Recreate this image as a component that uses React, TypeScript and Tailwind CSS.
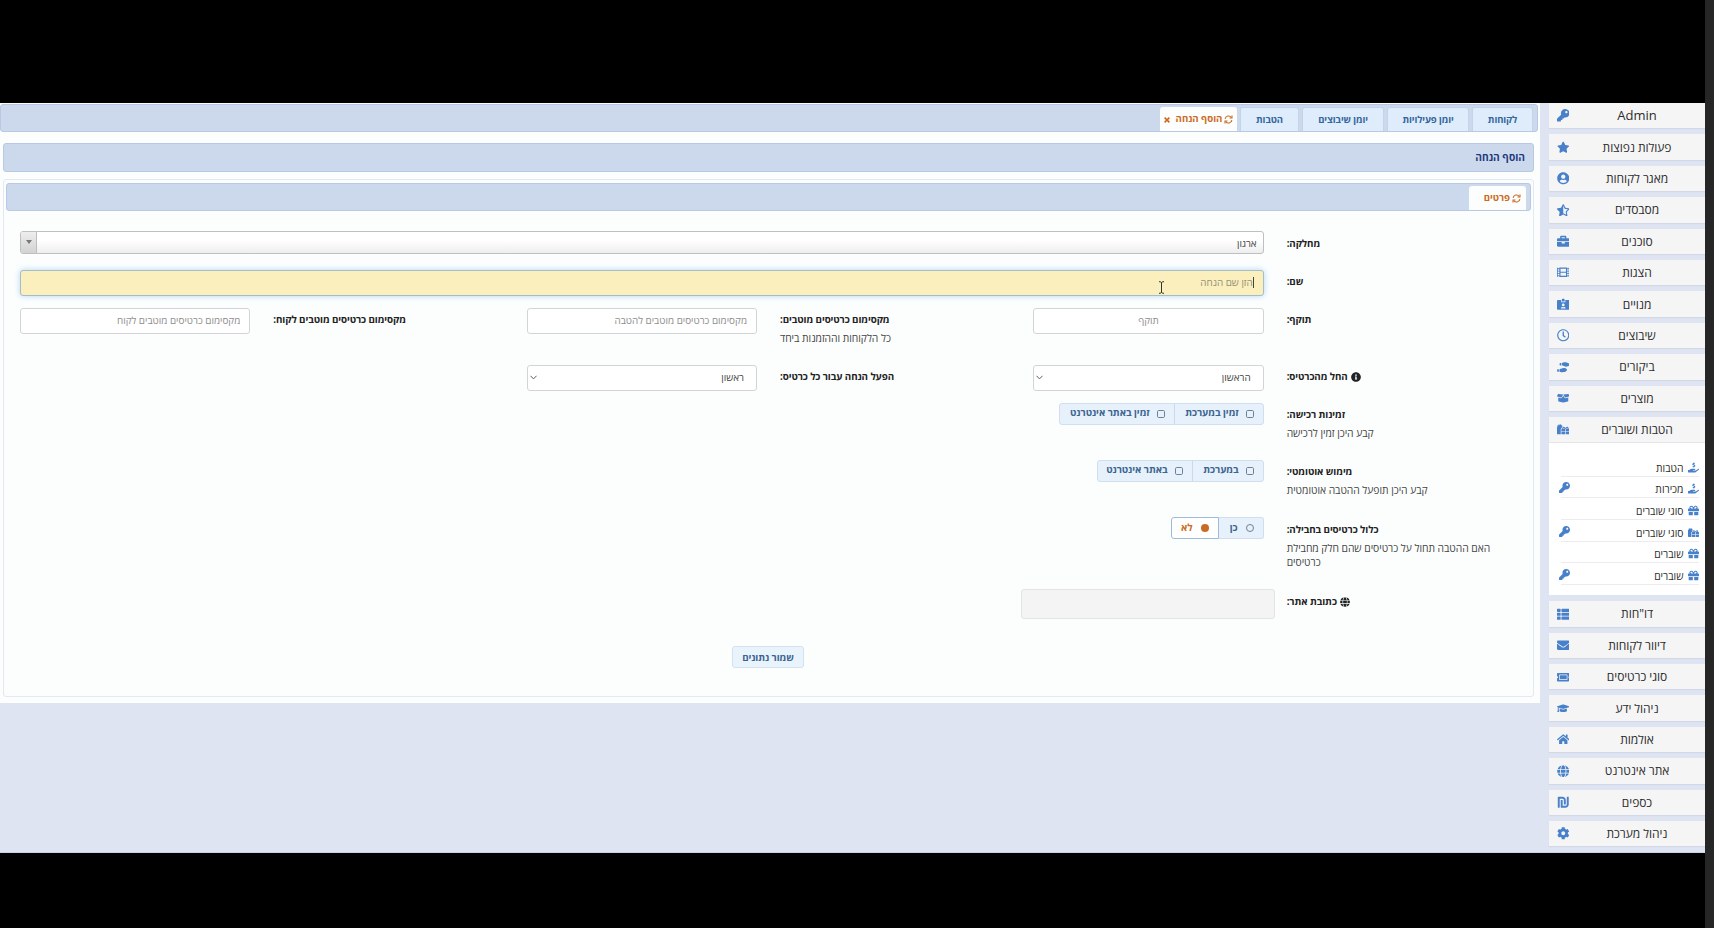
import type { ReactNode } from 'react';
import type { IconType } from 'react-icons';
import {
  FaBoxOpen,
  FaBriefcase,
  FaCog,
  FaEnvelope,
  FaFilm,
  FaGift,
  FaGifts,
  FaGlobe,
  FaGraduationCap,
  FaHandHoldingUsd,
  FaHome,
  FaIdCardAlt,
  FaInfoCircle,
  FaKey,
  FaRegClock,
  FaShekelSign,
  FaShoePrints,
  FaStar,
  FaStarHalfAlt,
  FaThList,
  FaTicketAlt,
  FaUserCircle,
} from 'react-icons/fa';

interface MenuEntry {
  label: string;
  icon: IconType;
}

interface SubEntry extends MenuEntry {
  locked?: boolean;
}

const topMenu: MenuEntry[] = [
  { label: 'Admin', icon: FaKey },
  { label: 'פעולות נפוצות', icon: FaStar },
  { label: 'מאגר לקוחות', icon: FaUserCircle },
  { label: 'מסבסדים', icon: FaStarHalfAlt },
  { label: 'סוכנים', icon: FaBriefcase },
  { label: 'הצגות', icon: FaFilm },
  { label: 'מנויים', icon: FaIdCardAlt },
  { label: 'שיבוצים', icon: FaRegClock },
  { label: 'ביקורים', icon: FaShoePrints },
  { label: 'מוצרים', icon: FaBoxOpen },
  { label: 'הטבות ושוברים', icon: FaGifts },
];

const subMenu: SubEntry[] = [
  { label: 'הטבות', icon: FaHandHoldingUsd },
  { label: 'מכירות', icon: FaHandHoldingUsd, locked: true },
  { label: 'סוגי שוברים', icon: FaGift },
  { label: 'סוגי שוברים', icon: FaGifts, locked: true },
  { label: 'שוברים', icon: FaGift },
  { label: 'שוברים', icon: FaGift, locked: true },
];

const bottomMenu: MenuEntry[] = [
  { label: 'דו"חות', icon: FaThList },
  { label: 'דיוור לקוחות', icon: FaEnvelope },
  { label: 'סוגי כרטיסים', icon: FaTicketAlt },
  { label: 'ניהול ידע', icon: FaGraduationCap },
  { label: 'אולמות', icon: FaHome },
  { label: 'אתר אינטרנט', icon: FaGlobe },
  { label: 'כספים', icon: FaShekelSign },
  { label: 'ניהול מערכת', icon: FaCog },
];

const RefreshIcon = () => (
  <svg viewBox="0 0 16 16" className="h-[9px] w-[9px] shrink-0" fill="none" stroke="currentColor" strokeWidth="2">
    <path d="M2 7a6 6 0 0 1 11-2.5M14 9a6 6 0 0 1-11 2.5" />
    <path d="M14.2 1v4.4H9.8M1.8 15v-4.4h4.4" />
  </svg>
);

const MenuItem = ({ label, icon: Icon }: MenuEntry) => (
  <div className="flex h-[25.4px] items-center bg-[#f5f5f6] pl-2 shadow-[0_1px_1px_#d3d8e6]">
    <span className="flex w-4 shrink-0">
      <Icon className="h-[12.5px] w-auto text-[#4880ca]" />
    </span>
    <span
      className={`flex-1 pr-[15px] pl-3 text-center text-[#2c2c2c] ${label === 'Admin' ? 'text-[13px]' : 'pt-px text-[12px] tracking-[-0.05px]'}`}
    >
      {label}
    </span>
  </div>
);

const Sidebar = () => (
  <aside className="flex w-[156px] shrink-0 flex-col gap-1.5">
    {topMenu.map((item) => (
      <MenuItem key={item.label} {...item} />
    ))}
    <div className="-mt-1.5 h-[153px] border-t border-[#e4e5ea] bg-white pt-3 pr-1.5 pl-3">
      {subMenu.map(({ label, icon: Icon, locked }, i) => (
        <div
          key={i}
          dir="rtl"
          className="flex h-[21.6px] items-end border-b border-[#ececf0] text-[10.3px] text-[#2c2c2c]"
        >
          <span className="mb-[3px] flex w-[15px] justify-start">
            <Icon className="h-[11px] w-auto max-w-[13px] text-[#4880ca]" />
          </span>
          <span className="leading-[15px]">{label}</span>
          {locked && <FaKey className="mr-auto mb-[4px] -ml-[2px] h-[11px] w-[11px] text-[#4880ca]" />}
        </div>
      ))}
    </div>
    {bottomMenu.map((item) => (
      <MenuItem key={item.label} {...item} />
    ))}
  </aside>
);

const Tab = ({ children, className }: { children: ReactNode; className: string }) => (
  <div
    className={`flex h-[24px] items-center justify-center rounded-t-[3px] border border-b-0 border-[#c3d3ea] bg-[#deecfb] pt-px text-[9.5px] font-bold tracking-[-0.1px] text-[#33669b] ${className}`}
  >
    {children}
  </div>
);

interface LabelProps {
  children: ReactNode;
  hint?: string;
  icon?: ReactNode;
}

const Label = ({ children, hint, icon }: LabelProps) => (
  <div className="pt-[3.5px] pr-6 pl-3 text-left">
    <div className="flex items-center justify-end gap-[3px] text-[9.8px] leading-[18px] font-bold tracking-[-0.1px] text-[#222]">
      {icon}
      <span>{children}</span>
    </div>
    {hint && <p className="mt-[2px] text-[10.3px] leading-[14.5px] tracking-[-0.03px] text-[#444]">{hint}</p>}
  </div>
);

const TextField = ({ placeholder, center }: { placeholder: string; center?: boolean }) => (
  <div className="pr-[11px] pl-3">
    <div
      className={`flex h-[26px] items-center rounded-[3px] border border-[#d2d5d8] bg-white px-[9px] text-[9.9px] text-[#8e8e8e] ${center ? 'justify-center' : ''}`}
    >
      {placeholder}
    </div>
  </div>
);

const SelectField = ({ value }: { value: string }) => (
  <div className="pr-[11px] pl-3">
    <div className="flex h-[26px] items-center justify-between rounded-[3px] border border-[#d2d5d8] bg-white pr-3 pl-[2px] text-[9.9px] text-[#444]">
      <span>{value}</span>
      <svg viewBox="0 0 8 8" className="h-[7px] w-[7px]" fill="none" stroke="#555" strokeWidth="1.1">
        <path d="M0.5 2 4 5.6 7.5 2" />
      </svg>
    </div>
  </div>
);

const CheckOption = ({ label, className }: { label: string; className: string }) => (
  <div className={`flex items-center gap-[7px] border-[#c9d8ea] pr-[9px] whitespace-nowrap ${className}`}>
    <svg viewBox="0 0 8 8" className="h-2 w-2 shrink-0" fill="none" stroke="#6d8299">
      <rect x="0.5" y="0.5" width="7" height="7" rx="1.2" />
    </svg>
    <span>{label}</span>
  </div>
);

const ButtonSet = ({ children }: { children: ReactNode }) => (
  <div className="px-[11px]">
    <div className="flex h-[22px] w-fit rounded-[3px] border border-[#d0deee] bg-[#e7f1fb] text-[9.8px] font-bold tracking-[-0.05px] text-[#3b648f]">
      {children}
    </div>
  </div>
);

const Row = ({ children, className }: { children: ReactNode; className: string }) => (
  <div className={`grid grid-cols-6 items-start ${className}`}>{children}</div>
);

const DiscountForm = () => (
  <form className="pt-[20px] pr-[3px] pl-[2px]">
    <Row className="h-[38.5px]">
      <Label>מחלקה:</Label>
      <div className="col-span-5 pr-[11px] pl-3">
        <div className="flex h-[22.5px] items-stretch justify-between overflow-hidden rounded-[3px] border border-[#bdbfc1] bg-linear-to-b from-white from-40% to-[#eeeeee] text-[9.9px] text-[#444]">
          <span className="pr-1.5 leading-[22px]">ארגון</span>
          <span className="flex w-4 items-center justify-center border-r border-[#bdbfc1] bg-linear-to-b from-[#eeeeee] to-[#d2d2d2]">
            <span className="border-x-[3px] border-t-4 border-x-transparent border-t-[#777]" />
          </span>
        </div>
      </div>
    </Row>
    <Row className="h-[38px]">
      <Label>שם:</Label>
      <div className="col-span-5 pr-[11px] pl-3">
        <div className="relative flex h-[26.5px] items-center rounded-[3px] border border-[#a3bdc9] bg-[#fbefbd] pr-[9px] text-[9.9px] text-[#948f78] shadow-[0_0_6px_#b4d5f2]">
          <span className="h-[11px] w-px bg-[#444]" />
          <span>הזן שם הנחה</span>
          <svg viewBox="0 0 7 13" className="absolute top-[10px] right-[98px] h-[13px] w-[7px]" fill="none" stroke="#333">
            <path d="M1 .7c1.500 0 2.500.3 2.500 1.300v9c0 1-1 1.300-2.500 1.300M6 .7C4.500.7 3.500 1 3.500 2v9c0 1 1 1.300 2.500 1.300" />
          </svg>
        </div>
      </div>
    </Row>
    <Row className="h-[57px]">
      <Label>תוקף:</Label>
      <TextField placeholder="תוקף" center />
      <Label hint="כל הלקוחות וההזמנות ביחד">מקסימום כרטיסים מוטבים:</Label>
      <TextField placeholder="מקסימום כרטיסים מוטבים להטבה" />
      <Label>מקסימום כרטיסים מוטבים לקוח:</Label>
      <TextField placeholder="מקסימום כרטיסים מוטבים לקוח" />
    </Row>
    <Row className="h-[38px]">
      <Label icon={<FaInfoCircle className="h-2.5 w-2.5" />}>החל מהכרטיס:</Label>
      <SelectField value="הראשון" />
      <Label>הפעל הנחה עבור כל כרטיס:</Label>
      <SelectField value="ראשון" />
    </Row>
    <Row className="h-[57px]">
      <Label hint="קבע היכן זמין לרכישה">זמינות רכישה:</Label>
      <ButtonSet>
        <CheckOption label="זמין במערכת" className="w-[88px]" />
        <CheckOption label="זמין באתר אינטרנט" className="w-[115px] border-r" />
      </ButtonSet>
    </Row>
    <Row className="h-[57.5px]">
      <Label hint="קבע היכן תופעל ההטבה אוטומטית">מימוש אוטומטי:</Label>
      <ButtonSet>
        <CheckOption label="במערכת" className="w-[70px]" />
        <CheckOption label="באתר אינטרנט" className="w-[95px] border-r" />
      </ButtonSet>
    </Row>
    <Row className="h-[72px]">
      <Label hint="האם ההטבה תחול על כרטיסים שהם חלק מחבילת כרטיסים">כלול כרטיסים בחבילה:</Label>
      <div className="px-[11px]">
        <div className="flex h-[22px] w-fit text-[9.8px] font-bold">
          <div className="flex w-[45px] items-center gap-[8px] rounded-r-[3px] border border-l-0 border-[#d0deee] bg-[#e7f1fb] pr-[9px] text-[#3b648f]">
            <span className="h-2 w-2 rounded-full border border-[#6d8299]" />
            <span>כן</span>
          </div>
          <div className="flex w-[48px] items-center gap-[8px] rounded-l-[3px] border border-[#9dbbdc] bg-white pr-[9px] text-[#cc6a22]">
            <span className="h-2 w-2 rounded-full bg-[#cc6a22]" />
            <span>לא</span>
          </div>
        </div>
      </div>
    </Row>
    <Row className="h-[57px]">
      <Label icon={<FaGlobe className="h-2.5 w-2.5" />}>כתובת אתר:</Label>
      <div className="h-[30px] rounded-[3px] border border-[#e4e4e4] bg-[#f4f4f4]" />
    </Row>
    <div className="flex justify-center">
      <button
        type="button"
        className="h-[22px] w-[72px] rounded-[3px] border border-[#d3e1f0] bg-[#e9f3fc] text-[9.8px] leading-[19px] font-bold tracking-[-0.1px] text-[#3b648f]"
      >
        שמור נתונים
      </button>
    </div>
  </form>
);

export default function App() {
  return (
    <div className="flex h-[928px] w-[1714px] overflow-hidden bg-[#262626] font-['Open_Sans','Noto_Sans',sans-serif] whitespace-nowrap">
      <div className="flex w-[1705px] flex-col bg-black pt-[103px]">
        <div className="flex h-[750px] items-start gap-[8.5px] overflow-hidden border-b border-[#c9d3e8] bg-[#dfe4f2]">
          <main dir="rtl" className="h-[600px] w-[1540px] shrink-0 bg-[#fcfefe] pt-px">
            <div className="mr-0.5 flex h-7 w-[1538px] items-end gap-[3px] rounded-[3px] border border-[#b9c8e4] bg-[#ccd9ed] pr-1">
              <Tab className="w-[61px]">לקוחות</Tab>
              <Tab className="w-[82px]">יומן פעילויות</Tab>
              <Tab className="w-[82px]">יומן שיבוצים</Tab>
              <Tab className="w-[59px]">הטבות</Tab>
              <div className="flex h-6 w-[77px] items-center justify-center gap-[2px] rounded-t-[3px] bg-[#fcfefe] pt-px text-[9.6px] font-bold text-[#cc6a22]">
                <RefreshIcon />
                <span>הוסף הנחה</span>
                <svg viewBox="0 0 6 6" className="mr-1 h-1.5 w-1.5" stroke="currentColor" strokeWidth="1.6">
                  <path d="M.6.6l4.800 4.800M5.400.6L.6 5.400" />
                </svg>
              </div>
            </div>
            <div className="mt-[11px] mr-[6px] ml-[3px] flex h-[29px] items-center rounded-[3px] border border-[#b9c8e4] bg-[#ccd9ed] pr-2 text-[10.2px] font-bold text-[#263a7d]">
              הוסף הנחה
            </div>
            <div className="mt-[7px] mr-[6px] ml-[3px] h-[518px] rounded-[3px] border border-[#e2e9f3] px-0.5 pt-[3px] whitespace-normal">
              <div className="flex h-7 items-end rounded-[3px] border border-[#b9c8e4] bg-[#ccd9ed] pr-1">
                <div className="flex h-6 w-[57px] items-center justify-start gap-[2px] rounded-t-[3px] bg-[#fcfefe] pt-px pr-[5px] text-[9.6px] font-bold text-[#cc6a22]">
                  <RefreshIcon />
                  <span>פרטים</span>
                </div>
              </div>
              <DiscountForm />
            </div>
          </main>
          <Sidebar />
        </div>
      </div>
    </div>
  );
}
